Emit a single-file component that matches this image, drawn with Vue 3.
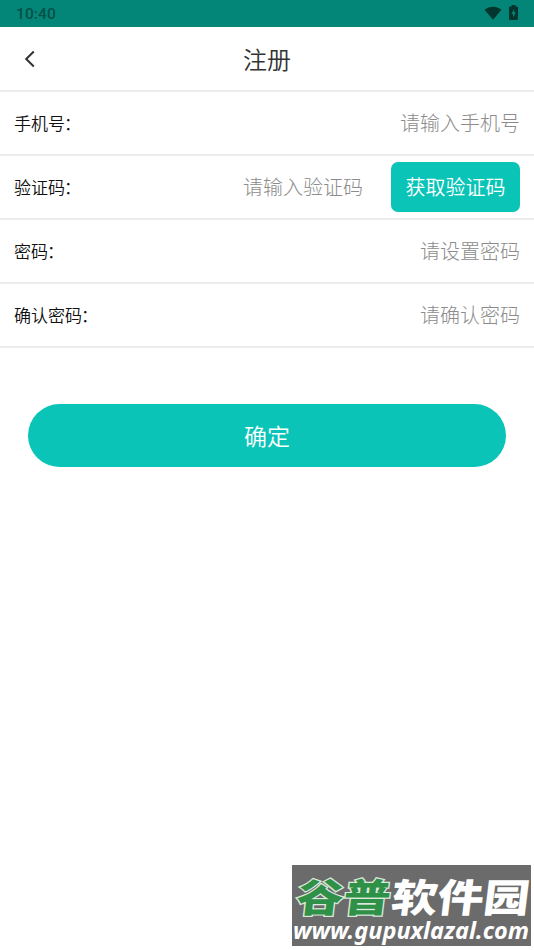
<script setup>
const fields = [
  { label: '手机号', hint: '请输入手机号' },
  { label: '验证码', hint: '请输入验证码', action: '获取验证码' },
  { label: '密码', hint: '请设置密码' },
  { label: '确认密码', hint: '请确认密码' },
]
</script>

<template>
  <div class="screen">
    <div class="status">
      <span class="clock">10:40</span>
      <div class="indicators">
        <svg class="wifi" width="18" height="14" viewBox="0 0 18 14">
          <path d="M0.5 3.8C5.4-.2 12.6-.2 17.5 3.8L9 13.7Z" />
        </svg>
        <svg class="battery" width="9" height="15" viewBox="0 0 9 15">
          <path
            fill-rule="evenodd"
            d="M2.6 0h3.8v1.5H8q1 0 1 1V14q0 1-1 1H1q-1 0-1-1V2.500q0-1 1-1h1.600ZM5.300 4 2.300 9h1.800v3.500L6.900 7.500H5.100Z"
          />
        </svg>
      </div>
    </div>

    <header class="header">
      <svg class="back" width="12" height="18" viewBox="0 0 12 18">
        <path d="M9.800 1.500 2.200 9l7.600 7.500" />
      </svg>
      <h1 class="title">注册</h1>
    </header>

    <main>
      <div v-for="field in fields" :key="field.label" class="row">
        <span class="label">{{ field.label }}<span class="colon">：</span></span>
        <span class="hint">{{ field.hint }}</span>
        <button v-if="field.action" class="code">{{ field.action }}</button>
      </div>
      <button class="submit">确定</button>
    </main>

    <svg class="watermark" width="239" height="81" viewBox="0 0 239 81">
      <rect width="239" height="81" fill="#6b6b6b" />
      <g class="brand" transform="translate(5 47) skewX(-7)">
        <text class="green" x="-2" y="0" textLength="94" lengthAdjust="spacingAndGlyphs">谷普</text>
        <text class="white" x="93" y="0" textLength="138" lengthAdjust="spacingAndGlyphs">软件园</text>
      </g>
      <text class="url" x="1" y="74" textLength="236" lengthAdjust="spacingAndGlyphs">www.gupuxlazal.com</text>
    </svg>
  </div>
</template>

<style>
body {
  background: #fff;
}
</style>

<style scoped>
.screen {
  position: relative;
  width: 534px;
  height: 950px;
  overflow: hidden;
  background: #fff;
  font-family: "Noto Sans CJK SC", sans-serif;
}
.status {
  display: flex;
  align-items: center;
  justify-content: space-between;
  box-sizing: border-box;
  height: 27px;
  padding: 0 16px 0 16px;
  background: #038677;
}
.clock {
  font: 500 15.5px/20px Roboto, sans-serif;
  letter-spacing: 0.1px;
  color: #035047;
}
.indicators {
  display: flex;
  align-items: center;
  gap: 7px;
  padding-bottom: 2px;
  fill: #03352f;
}
.header {
  display: flex;
  align-items: center;
  box-sizing: border-box;
  height: 65px;
  padding: 0 24px;
  border-bottom: 2px solid #ededed;
}
.back {
  fill: none;
  stroke: #333;
  stroke-width: 2;
}
.title {
  flex: 1;
  margin: 0 12px 0 0;
  text-align: center;
  font-size: 24px;
  font-weight: 350;
  line-height: 36px;
  color: #333;
}
.row {
  display: flex;
  align-items: center;
  box-sizing: border-box;
  height: 64px;
  padding: 0 14px;
  border-bottom: 2px solid #ededed;
}
.label {
  font-size: 17px;
  font-weight: 350;
  line-height: 26px;
  color: #111;
}
.colon {
  margin-left: -1px;
}
.hint {
  flex: 1;
  text-align: right;
  font-size: 20px;
  font-weight: 300;
  line-height: 30px;
  color: #8c8c8c;
}
button {
  padding: 0 0 2px;
  border: 0;
  background: #09c4b7;
  color: #fff;
  font-family: inherit;
  font-weight: 350;
}
.code {
  width: 129px;
  height: 50px;
  margin-left: 28px;
  border-radius: 7px;
  font-size: 20px;
}
.submit {
  display: block;
  width: 478px;
  height: 63px;
  margin: 56px auto 0;
  border-radius: 32px;
  font-size: 23px;
}
.watermark {
  position: absolute;
  left: 292px;
  top: 865px;
}
.brand text {
  font: 900 39px "Noto Sans CJK SC", sans-serif;
}
.brand .green {
  fill: #2f9148;
  stroke: #dce9dd;
  stroke-width: 2.4px;
  paint-order: stroke;
}
.white {
  fill: #fff;
}
.url {
  font: italic 700 23px "Noto Sans", sans-serif;
  fill: #fff;
}
</style>
